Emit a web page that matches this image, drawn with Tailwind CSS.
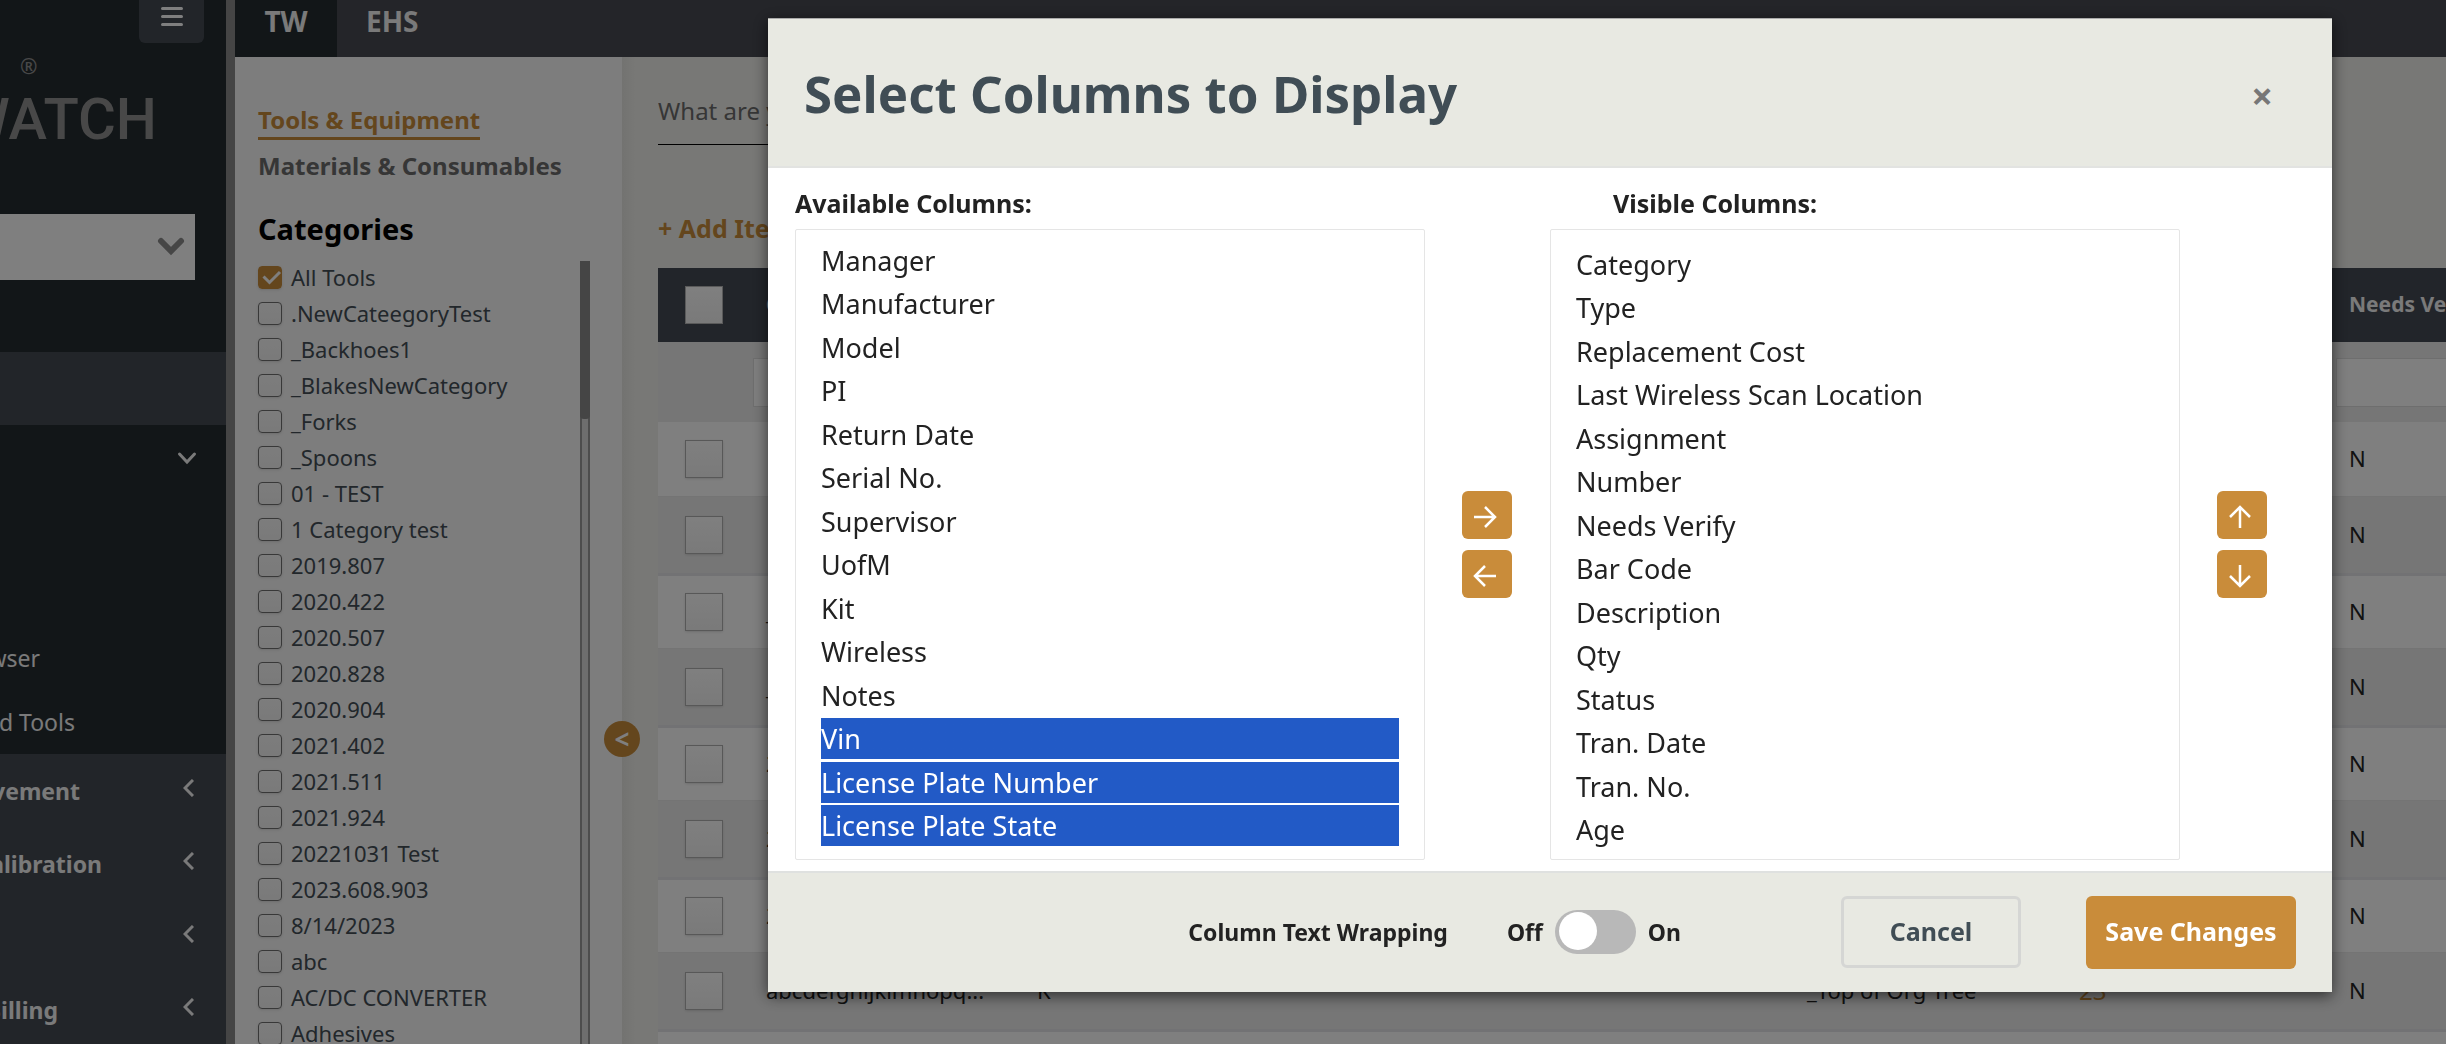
<!DOCTYPE html>
<html lang="en">
<head>
<meta charset="utf-8">
<title>ToolWatch</title>
<script src="https://cdn.jsdelivr.net/npm/@tailwindcss/browser@4"></script>
</head>
<body class="h-screen overflow-hidden bg-[#f1f1ed] font-['Noto_Sans',sans-serif] text-[#222]">
<div class="flex h-full overflow-hidden">

  <!-- Main navigation -->
  <nav class="flex w-[235px] shrink-0 flex-col overflow-hidden border-r-9 border-[#8a8a8a] bg-[#242c30] text-[23px] text-[#f4f4f4]">
    <div class="flex h-[43px] shrink-0 justify-end pr-[22px]">
      <button aria-label="Menu" class="flex w-[65px] justify-center rounded-b-md bg-[#444a52] pt-[6px]">
        <svg class="h-[21px] w-[24px]" viewBox="0 0 24 21" stroke="#fff" stroke-width="3" stroke-linecap="round"><path d="M2.500 2.500h19M2.500 10.500h19M2.500 18.500h19"/></svg>
      </button>
    </div>
    <div class="relative flex h-[171px] shrink-0 justify-end pr-[69px] pt-[26px] font-['Roboto',sans-serif] text-[58px] font-medium leading-[100px] text-[#909090]">
      <span class="absolute left-[20px] top-[11px] font-['Noto_Sans',sans-serif] text-[21px] leading-6">®</span>WATCH
    </div>
    <button aria-label="Select company" class="mr-[31px] flex h-[66px] shrink-0 items-center justify-end bg-white pr-[10px]">
      <svg class="h-[20px] w-[28px]" viewBox="0 0 28 20" fill="none" stroke="#8c8c8c" stroke-width="6" stroke-linecap="round"><path d="M4 4l10 10L24 4"/></svg>
    </button>
    <div class="mt-[72px] h-[73px] shrink-0 bg-[#444a52]"></div>
    <div class="flex h-[66px] shrink-0 items-center justify-end pr-[29px]">
      <svg class="h-[14px] w-[20px]" viewBox="0 0 20 14" fill="none" stroke="#f4f4f4" stroke-width="3" stroke-linecap="round"><path d="M2.500 3l7.500 8 7.500-8"/></svg>
    </div>
    <div class="mt-[135px] flex h-16 w-10 shrink-0 items-center justify-end whitespace-nowrap"><a href="#">Browser</a></div>
    <div class="flex h-16 w-[75px] shrink-0 items-center justify-end whitespace-nowrap"><a href="#">Assigned Tools</a></div>
    <div id="groups" class="flex-1 bg-[#444a52] font-bold"></div>
  </nav>

  <div class="flex min-w-0 flex-1 flex-col">
    <!-- Module tabs -->
    <div class="flex h-[57px] shrink-0 bg-[#484a52] text-[28px] font-bold leading-[42px] text-[#f4f4f4]">
      <a href="#" class="w-[102px] bg-[#242c30] text-center">TW</a>
      <a href="#" class="px-[29px]">EHS</a>
    </div>
    <div class="flex min-h-0 flex-1">
      <!-- Category filter -->
      <aside class="relative w-[387px] shrink-0 bg-[#fafafa] pl-[23px]">
        <div class="flex h-[204px] flex-col items-start text-[24px] font-bold">
          <a href="#" class="mt-[46px] border-b-3 border-[#c98c3a] leading-[34px] text-[#c98c3a]">Tools &amp; Equipment</a>
          <a href="#" class="mt-[8px] leading-[36px] text-[#6c6c6c]">Materials &amp; Consumables</a>
          <h2 class="mt-[23px] text-[29px] leading-[44px] text-black">Categories</h2>
        </div>
        <div class="flex">
          <div id="cats" class="w-[322px] text-[22px] text-[#444f57]"></div>
          <div class="h-[783px] w-[10px] border-x-2 border-[#9a9a9a] bg-[#dcdcdc]"><div class="-mx-[2px] h-[158px] rounded-b-sm bg-[#8a8a8a]"></div></div>
        </div>
        <button aria-label="Collapse panel" class="absolute -right-[18px] top-[664px] z-10 h-9 w-9 rounded-full bg-[#c98c3a] text-[26px] font-bold leading-9 text-white">&lt;</button>
      </aside>

      <!-- Inventory grid -->
      <main class="min-w-0 flex-1 overflow-hidden bg-linear-to-r from-[#e6e6e2] to-[#f1f1ed] to-[14px] pl-9">
        <input aria-label="Search" placeholder="What are you looking for?" class="mt-[22px] h-[66px] w-[760px] border-b border-black pb-[2px] text-[24px] placeholder:text-[#6c6c6c]">
        <div class="flex h-[123px] items-start pt-[62px]"><a href="#" class="text-[25px] font-bold leading-[42px] text-[#c98c3a]">+ Add Item</a></div>
        <table class="w-full table-fixed border-collapse text-left text-[22px]">
          <colgroup><col class="w-[95px]"><col class="w-[271px]"><col class="w-[772px]"><col class="w-[270px]"><col class="w-[270px]"><col></colgroup>
          <thead>
            <tr class="h-[74px] bg-[#444a54] text-[21px] text-[#f4f4f4]">
              <th class="pl-[27px]"><input type="checkbox" aria-label="Select all" class="block h-[38px] w-[38px] appearance-none border border-[#b5b5b5] bg-linear-to-b from-white to-[#f4f4f4]"></th>
              <th class="pl-[13px]">Category</th><th class="pl-[13px]">Type</th><th class="pl-[13px]">Assignment</th><th class="pl-[13px]">Number</th><th class="whitespace-nowrap pl-[13px]">Needs Verify</th>
            </tr>
            <tr class="h-[80px] bg-[#ededed]">
              <td></td>
              <td><input aria-label="Filter category" class="block h-[49px] w-[250px] border border-[#ddd] bg-white"></td>
              <td></td><td></td><td></td>
              <td><input aria-label="Filter needs verify" class="block h-[49px] w-[250px] border border-[#ddd] bg-white"></td>
            </tr>
          </thead>
          <tbody id="rows"></tbody>
        </table>
      </main>
    </div>
  </div>
</div>

<!-- Column picker dialog -->
<div class="fixed inset-0 z-20 flex items-start bg-black/50 pl-[768px] pr-[114px] pt-[18px]">
  <div role="dialog" aria-labelledby="dlg" class="min-w-0 flex-1 border-t border-[#aaa] bg-white shadow-[0_4px_14px_rgba(0,0,0,0.6)]">
    <div class="flex h-[149px] items-center justify-between border-b-2 border-[#e2e3e1] bg-[#e8e9e2] pl-[36px] pr-[58px]">
      <h1 id="dlg" class="text-[51px] font-bold leading-[68px] text-[#404d55]">Select Columns to Display</h1>
      <button aria-label="Close" class="w-6 pt-1 text-[38px] font-bold leading-8 text-[#777]">×</button>
    </div>
    <div class="flex h-[703px] pl-[27px]">
      <div class="w-[630px]">
        <label for="avail" class="block h-[61px] pt-[17px] text-[25px] font-bold leading-[36px]">Available Columns:</label>
        <select id="avail" multiple size="14" class="block h-[631px] w-full overflow-hidden rounded-xs border border-[#e5e5e5] px-[25px] pt-[10px] text-[27px] outline-none"></select>
      </div>
      <div class="ml-[37px] mr-[38px] flex w-[50px] flex-col justify-center gap-[11px] pt-[50px]">
        <button aria-label="Show column" class="flex h-12 items-center justify-center rounded-md bg-[#c98c3a] pr-[5px] pt-[3px]"><svg class="size-6" viewBox="0 0 24 24" fill="none" stroke="#fff" stroke-width="2.500"><path d="M1 12h20M12 2l10 10-10 10"/></svg></button>
        <button aria-label="Hide column" class="flex h-12 items-center justify-center rounded-md bg-[#c98c3a] pr-[5px] pt-[3px]"><svg class="size-6" viewBox="0 0 24 24" fill="none" stroke="#fff" stroke-width="2.500"><path d="M23 12H3M12 2L2 12l10 10"/></svg></button>
      </div>
      <div class="w-[630px]">
        <label for="visible" class="block h-[61px] pl-[63px] pt-[17px] text-[25px] font-bold leading-[36px]">Visible Columns:</label>
        <select id="visible" multiple size="14" class="block h-[631px] w-full overflow-hidden rounded-xs border border-[#e5e5e5] px-[25px] pt-[14px] text-[27px] outline-none"></select>
      </div>
      <div class="ml-[37px] flex w-[50px] flex-col justify-center gap-[11px] pt-[50px]">
        <button aria-label="Move up" class="flex h-12 items-center justify-center rounded-md bg-[#c98c3a] pr-[5px] pt-[3px]"><svg class="size-6" viewBox="0 0 24 24" fill="none" stroke="#fff" stroke-width="2.500"><path d="M12 23V3M2 12L12 2l10 10"/></svg></button>
        <button aria-label="Move down" class="flex h-12 items-center justify-center rounded-md bg-[#c98c3a] pr-[5px] pt-[3px]"><svg class="size-6" viewBox="0 0 24 24" fill="none" stroke="#fff" stroke-width="2.500"><path d="M12 1v20M2 12l10 10 10-10"/></svg></button>
      </div>
    </div>
    <div class="flex h-[121px] items-center justify-end border-t-2 border-[#dfe1e0] bg-[#e8e9e2] pb-[1px] pr-9 text-[23px] font-bold">
      <span class="mr-[59px]">Column Text Wrapping</span>
      <label for="wrap">Off</label>
      <input id="wrap" type="checkbox" role="switch" class="relative mx-3 h-[44px] w-[81px] appearance-none rounded-full bg-[#b8b8b8] before:absolute before:left-1 before:top-[2px] before:size-[38px] before:rounded-full before:bg-white">
      <label for="wrap">On</label>
      <button class="ml-[160px] h-[72px] w-[180px] rounded-md border-3 border-[#d5d6d4] text-[25px] text-[#404d55]">Cancel</button>
      <button class="ml-[65px] h-[73px] w-[210px] rounded-md bg-[#c98c3a] text-[25px] text-white">Save Changes</button>
    </div>
  </div>
</div>

<script>
const fill = (id, html) => { document.getElementById(id).innerHTML = html.join(''); };

const groups = [['Tool Movement', 80], ['Calibration', 102], ['Kits', 0], ['Billing', 58]];
fill('groups', groups.map(([t, w]) => `<a href="#" class="flex h-[73px] items-center justify-between pb-[6px] pr-[32px]"><span class="flex justify-end overflow-hidden whitespace-nowrap pt-[8px]" style="width:${w}px">${t}</span><svg class="h-[18px] w-[11px]" viewBox="0 0 11 18" fill="none" stroke="#f4f4f4" stroke-width="3"><path d="M10 1L2 9l8 8"/></svg></a>`));

const cats = ['All Tools', '.NewCateegoryTest', '_Backhoes1', '_BlakesNewCategory', '_Forks', '_Spoons', '01 - TEST', '1 Category test', '2019.807', '2020.422', '2020.507', '2020.828', '2020.904', '2021.402', '2021.511', '2021.924', '20221031 Test', '2023.608.903', '8/14/2023', 'abc', 'AC/DC CONVERTER', 'Adhesives'];
fill('cats', cats.map((c, i) => `<label class="flex h-9 items-center gap-[9px] pb-[3px]"><span class="relative flex"><input type="checkbox" ${i ? '' : 'checked'} class="h-[23px] w-6 appearance-none rounded border border-[#707070] bg-linear-to-b from-[#fafafa] to-[#f4f4f4] shadow-sm checked:border-[#c98c3a] checked:from-[#c98c3a] checked:to-[#c98c3a]">${i ? '' : '<svg class="absolute left-[4px] top-[4px] h-[16px] w-[20px]" viewBox="0 0 20 16" fill="none" stroke="#fff" stroke-width="3"><path d="M1.500 6.500l6 6L18 2"/></svg>'}</span>${c}</label>`));

const rows = [['', ''], ['', ''], ['_Anchors', ''], ['_Anchors', ''], ['2019.807', ''], ['2019.807', ''], ['2019.807', ''], ['abcdefghijklmnopq...', 'K', '_Top of Org Tree', '23'], ['', '']];
fill('rows', rows.map(([a, k, org = '', n = '']) => `<tr class="h-[74px] border-b border-[#e8e8e8] bg-white even:h-[78px] even:border-b-3 even:border-[#e4e5e8] even:bg-[#ededed]"><td class="pl-[27px]"><input type="checkbox" aria-label="Select row" class="block h-[38px] w-[38px] appearance-none border border-[#b0b0b0] bg-linear-to-b from-white to-[#f4f4f4] shadow-sm"></td><td class="pl-[13px]">${a}</td><td class="pl-[13px]">${k}</td><td class="pl-[11px]">${org}</td><td class="pl-[13px]"><a href="#" class="text-[24px] text-[#c98c3a]">${n}</a></td><td class="pl-[13px]">N</td></tr>`));

const opt = (t, sel) => `<option ${sel ? 'selected' : ''} class="flex h-[41px] min-h-0 items-center p-0 text-[27px] leading-[41px] odd:mb-[2px] even:mb-[3px] checked:bg-linear-to-r checked:from-[#225ac6] checked:to-[#225ac6] checked:[-webkit-text-fill-color:white]">${t}</option>`;
fill('avail', ['Manager', 'Manufacturer', 'Model', 'PI', 'Return Date', 'Serial No.', 'Supervisor', 'UofM', 'Kit', 'Wireless', 'Notes', 'Vin', 'License Plate Number', 'License Plate State'].map((t, i) => opt(t, i > 10)));
fill('visible', ['Category', 'Type', 'Replacement Cost', 'Last Wireless Scan Location', 'Assignment', 'Number', 'Needs Verify', 'Bar Code', 'Description', 'Qty', 'Status', 'Tran. Date', 'Tran. No.', 'Age'].map(t => opt(t, false)));
</script>
</body>
</html>
